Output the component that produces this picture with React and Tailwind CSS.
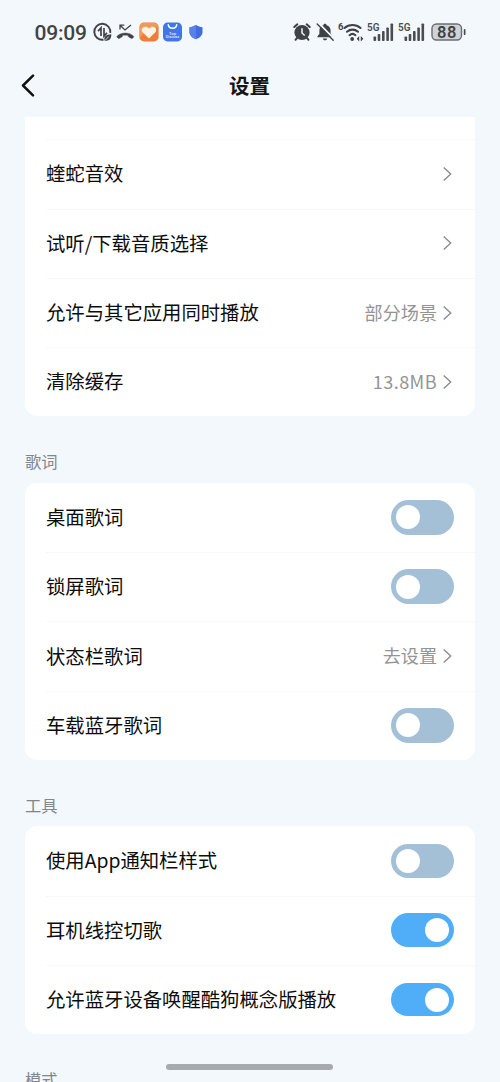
import React, { useState } from "react";

const playbackRows = [
  { label: "蝰蛇音效", type: "link" },
  { label: "试听/下载音质选择", type: "link" },
  { label: "允许与其它应用同时播放", type: "link", value: "部分场景" },
  { label: "清除缓存", type: "link", value: "13.8MB", latin: true },
];

const lyricRows = [
  { label: "桌面歌词", type: "switch", on: false },
  { label: "锁屏歌词", type: "switch", on: false },
  { label: "状态栏歌词", type: "link", value: "去设置" },
  { label: "车载蓝牙歌词", type: "switch", on: false },
];

const toolRows = [
  { label: "使用App通知栏样式", type: "switch", on: false },
  { label: "耳机线控切歌", type: "switch", on: true },
  { label: "允许蓝牙设备唤醒酷狗概念版播放", type: "switch", on: true },
];

function Signal() {
  return (
    <svg width="27" height="20" viewBox="0 0 27 20" fill="#4a4e52">
      <text x="0" y="9" fontSize="11" fontWeight="600" fontFamily="Roboto, sans-serif" textLength="12.5" lengthAdjust="spacingAndGlyphs">5G</text>
      <rect x="6.5" y="14.5" width="2.6" height="4.5" rx="0.8" />
      <rect x="10.7" y="12" width="2.6" height="7" rx="0.8" />
      <rect x="15" y="9" width="2.6" height="10" rx="0.8" />
      <rect x="19.3" y="5.5" width="2.6" height="13.5" rx="0.8" />
      <rect x="23.5" y="1.5" width="2.6" height="17.5" rx="0.8" />
    </svg>
  );
}

function StatusBar() {
  return (
    <div className="flex h-16 items-center justify-between pr-[33px] pl-[34.5px] text-[#3f4347]">
      <div className="flex items-center">
        <span className="w-[58px] pt-[2px] font-[Roboto,sans-serif] text-[21px] leading-none font-medium tracking-[-0.2px]">09:09</span>
        {/* data saver */}
        <svg width="19" height="20" viewBox="0 0 19 20" fill="none" stroke="currentColor" strokeWidth="1.9">
          <path d="M10.5 17.7A8 8 0 1 1 17.2 11" />
          <path d="M8 14V6L5 9.2M11 6v8l3-3.2" strokeWidth="1.7" />
          <path d="M11.5 18.5c-.8-4 1.8-6 6.8-6.2.2 4.5-2.3 7.2-6.8 6.2z" fill="currentColor" stroke="none" />
          <path d="m12.5 18 3.2-3.5" stroke="#f3f8fc" strokeWidth=".8" />
        </svg>
        {/* missed call */}
        <svg className="ml-[4px]" width="19" height="20" viewBox="0 0 19 20" fill="none" stroke="currentColor" strokeWidth="1.3">
          <path d="M4 7.5V3.2h4.3M4.300 3.500 9 8l6-5" />
          <path d="M1.2 14C5.5 10 13 10 17.4 14c.5.5.4 1-.1 1.500l-.8.800c-.5.400-1 .300-1.500 0l-2.300-1.300c-.5-.300-.5-.700-.4-1.500-2-.5-4-.5-6 0 .1.800.1 1.200-.4 1.500l-2.300 1.300c-.5.300-1 .400-1.500 0l-.8-.800c-.5-.5-.6-1-.1-1.500z" fill="currentColor" stroke="currentColor" strokeWidth=".4" />
        </svg>
        <svg className="ml-[4px]" width="20" height="20" viewBox="0 0 20 20">
          <rect x="0.4" y="0.6" width="19.2" height="18.8" rx="4.5" fill="#ed7d38" />
          <path d="M1 16V5a4 4 0 0 1 4-4h10a4 4 0 0 1 4 4c-7 1-13 4-18 11z" fill="#f29a55" />
          <path d="M10 16.500 3.600 10.200C.6 7 5.800 2.200 10 6.500c4.200-4.300 9.400.5 6.400 3.700z" fill="#fff4e5" />
        </svg>
        <svg className="ml-[4px]" width="19" height="20" viewBox="0 0 19 20">
          <rect x="0" y="0.6" width="19" height="18.8" rx="4.5" fill="#4275e8" />
          <path d="M5.300 2.800c.7 4.500 7.700 4.500 8.400 0" fill="none" stroke="#fff" strokeWidth="1.5" strokeLinecap="round" />
          <text x="9.5" y="12.5" textAnchor="middle" fontSize="4.2" fontFamily="Roboto, sans-serif" fill="#fff">Top</text>
          <text x="9.5" y="16" textAnchor="middle" fontSize="3.8" fontFamily="Roboto, sans-serif" fill="#fff">Discuss</text>
        </svg>
        <svg className="ml-[7.5px]" width="14" height="16" viewBox="0 0 14 16">
          <path d="M7 1c2 1.300 4 2 6.500 2.200V8c0 3.300-2.500 5.700-6.500 7.200C3 13.700.5 11.300.5 8V3.200C3 3 5 2.300 7 1z" fill="#416be0" />
          <path d="M7 1v14.200C3 13.700.5 11.300.5 8V3.200C3 3 5 2.300 7 1z" fill="#5780ea" />
        </svg>
      </div>

      <div className="flex items-center">
        {/* alarm */}
        <svg width="18" height="20" viewBox="0 0 18 20" fill="none" stroke="currentColor">
          <circle cx="9" cy="10.5" r="7.6" fill="currentColor" stroke="none" />
          <path d="M1.300 5 4.300 2.300M16.700 5l-3-2.700" strokeWidth="2" strokeLinecap="round" />
          <path d="m4 16-1.500 1.800M14 16l1.500 1.800" strokeWidth="2" strokeLinecap="round" />
          <path d="M9 6.200v4.800l2.700 2.500" stroke="#f3f8fc" strokeWidth="1.5" />
        </svg>
        {/* muted bell */}
        <svg className="ml-[5px]" width="19" height="20" viewBox="0 0 19 20" fill="currentColor">
          <path d="M9 1.800c1 0 1.500.6 1.600 1.400 2.600.8 4 2.700 4 5.400v3.200l2 2.700v.7H1.400v-.7l2-2.700V8.600c0-2.700 1.400-4.600 4-5.400.1-.8.600-1.400 1.600-1.400zM6.800 16.400h4.400c-.3 1.200-1.100 1.900-2.200 1.900s-1.900-.7-2.200-1.900z" />
          <path d="m2.500 1 16 16.300" stroke="#f3f8fc" strokeWidth="1.8" />
          <path d="m1.200 2 16 16.300" stroke="currentColor" strokeWidth="1.4" strokeLinecap="round" />
        </svg>
        {/* wifi 6 */}
        <svg className="ml-[3px]" width="26" height="20" viewBox="0 0 26 20" fill="none" stroke="currentColor" strokeLinecap="round">
          <text x="0" y="8" fontSize="9.5" fontWeight="700" fontFamily="Roboto, sans-serif" fill="currentColor" stroke="none">6</text>
          <path d="M6.500 6a12 12 0 0 1 16 0" strokeWidth="2.1" />
          <path d="M9 9.700a8.300 8.300 0 0 1 11 0" strokeWidth="2.1" />
          <path d="M11.500 13.200a4.500 4.500 0 0 1 6 0" strokeWidth="2" />
          <circle cx="14.2" cy="17" r="1.9" fill="currentColor" stroke="none" />
          <path d="M21.200 14v5.600l-2.500-2.800zM22.800 14v5.600l2.500-2.800z" fill="currentColor" stroke="none" />
        </svg>
        <div className="ml-[2.5px] flex gap-[4.5px]">
          <Signal />
          <Signal />
        </div>
        {/* battery */}
        <svg className="ml-[6px]" width="36" height="20" viewBox="0 0 36 20">
          <rect x="1" y="2" width="29.5" height="16" rx="4.5" fill="#d0d3d5" stroke="#6a6e71" strokeWidth="1.4" />
          <rect x="32.8" y="7" width="1.7" height="6" rx=".85" fill="#4a4e52" />
          <text x="16" y="16" textAnchor="middle" fontSize="16.5" fontWeight="600" letterSpacing=".5" fontFamily="Roboto, sans-serif" fill="#3f4347">88</text>
        </svg>
      </div>
    </div>
  );
}

function Switch({ defaultOn }) {
  const [on, setOn] = useState(defaultOn);

  return (
    <button
      type="button"
      role="switch"
      aria-checked={on}
      onClick={() => setOn(!on)}
      className={`flex items-center rounded-full ${
        on
          ? "mr-[0.5px] h-[33.5px] w-[62.5px] justify-end bg-[#4faef7] pr-[4.5px]"
          : "h-[34.5px] w-[63.5px] justify-start bg-[#a3c0d7] pl-[5px]"
      }`}
    >
      <span className="size-6 rounded-full bg-white" />
    </button>
  );
}

function Row({ row, first }) {
  return (
    <div className="ml-[21px] h-[69.3px]">
      {!first && <div className="-mb-px h-px bg-[#f7f8f9]" />}
      <div className="flex h-full items-center justify-between pr-[21px]">
        <span className="text-[19.35px] whitespace-nowrap text-[#0c0c0c]">{row.label}</span>
        {row.type === "switch" ? (
          <Switch defaultOn={row.on} />
        ) : (
          <div className="flex items-center gap-[5.5px] pr-[2.5px] text-[#949494]">
            <span className={row.latin ? "text-[18.1px] tracking-[0.4px]" : "text-[18.1px]"}>{row.value}</span>
            <svg width="9" height="14" viewBox="0 0 9 14" fill="none" stroke="#8c8c8c" strokeWidth="1.4">
              <path d="m.7.6 7 6.400-7 6.400" />
            </svg>
          </div>
        )}
      </div>
    </div>
  );
}

function Card({ rows, continued }) {
  return (
    <div className={continued ? "rounded-b-xl bg-white pt-[22.5px]" : "rounded-xl bg-white"}>
      {rows.map((row, i) => (
        <Row key={row.label} row={row} first={i === 0 && !continued} />
      ))}
    </div>
  );
}

function SectionTitle({ children }) {
  return <h2 className="flex h-[66.3px] items-end pb-[9px] text-[16.3px] text-[#80868b]">{children}</h2>;
}

export default function App() {
  return (
    <div className="relative h-[1082px] w-[500px] overflow-hidden bg-[#f3f8fc] font-['Noto_Sans_CJK_SC',sans-serif]">
      <StatusBar />
      <header className="flex h-[52.8px] items-start pt-[5px]">
        <button type="button" className="flex h-8 w-20 items-center pl-[21px]">
          <svg width="14" height="23" viewBox="0 0 14 23" fill="none" stroke="#111" strokeWidth="2.5" strokeLinecap="round" strokeLinejoin="round">
            <path d="M12 1.700 2 11.500l10 9.800" />
          </svg>
        </button>
        <h1 className="flex-1 pr-[81px] text-center text-[20.5px] leading-8 font-bold text-[#151515]">设置</h1>
      </header>

      <main className="px-[25px]">
        <Card rows={playbackRows} continued />
        <SectionTitle>歌词</SectionTitle>
        <Card rows={lyricRows} />
        <SectionTitle>工具</SectionTitle>
        <Card rows={toolRows} />
        <SectionTitle>模式</SectionTitle>
      </main>

      {/* gesture bar */}
      <div className="absolute bottom-[12.5px] left-[166px] h-[5.5px] w-[167px] rounded-full bg-[#a7abae]" />
    </div>
  );
}
